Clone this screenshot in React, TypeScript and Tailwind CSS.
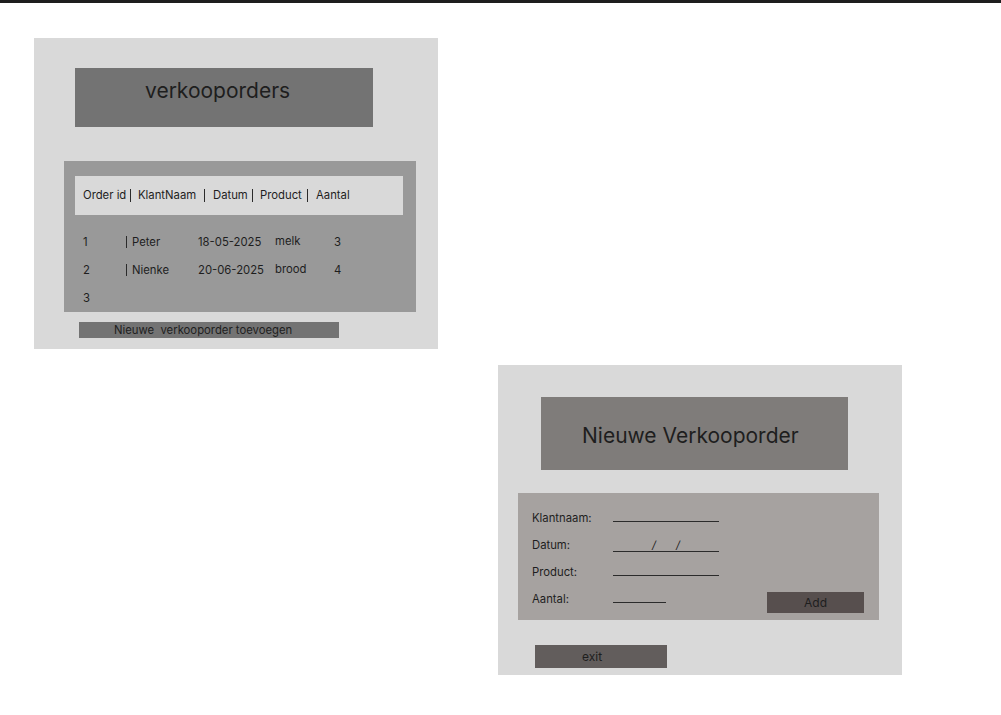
function Bar({ h = "h-[13px]" }: { h?: string }) {
  return <span className={`inline-block w-px shrink-0 bg-[#2b2b2b] ${h}`}></span>;
}

export default function App() {
  return (
    <div className="min-h-[715px] w-[1001px] bg-white font-['Inter',sans-serif] text-[#1e1e1e]">
      <div className="h-[3px] w-full bg-[#1e1e1e]"></div>

      {/* overzicht verkooporders */}
      <div className="ml-[34px] mt-[35px] flex h-[311px] w-[404px] flex-col bg-[#d9d9d9]">
        <div className="ml-[41px] mt-[30px] h-[59px] w-[298px] bg-[#737373] pl-[70px] pt-[10px] text-[21px] leading-[25px]">
          verkooporders
        </div>

        <div className="ml-[30px] mt-[34px] h-[151px] w-[352px] bg-[#999999] pl-[11px] pt-[15px]">
          <div className="flex h-[39px] w-[328px] items-center bg-[#d9d9d9] pb-[1px] pl-[8px] text-[11.3px] leading-[14px]">
            <span className="w-[47px]">Order id</span>
            <Bar />
            <span className="ml-[7px] w-[66px]">KlantNaam</span>
            <Bar />
            <span className="ml-[8px] w-[39px]">Datum</span>
            <Bar />
            <span className="ml-[7px] w-[47px]">Product</span>
            <Bar />
            <span className="ml-[8px]">Aantal</span>
          </div>
          <div className="mt-[13px] flex flex-col pl-[8px] text-[11.3px] leading-[14px]">
            <div className="flex h-[28px] items-center">
              <span className="w-[43px]">1</span>
              <span className="flex w-[72px] items-center">
                <Bar h="h-[12px]" />
                <span className="ml-[5px]">Peter</span>
              </span>
              <span className="w-[77px]">18-05-2025</span>
              <span className="mb-[3px] w-[59px]">melk</span>
              <span>3</span>
            </div>
            <div className="flex h-[28px] items-center">
              <span className="w-[43px]">2</span>
              <span className="flex w-[72px] items-center">
                <Bar h="h-[12px]" />
                <span className="ml-[5px]">Nienke</span>
              </span>
              <span className="w-[77px]">20-06-2025</span>
              <span className="mb-[3px] w-[59px]">brood</span>
              <span>4</span>
            </div>
            <div className="flex h-[28px] items-center">
              <span className="w-[43px]">3</span>
            </div>
          </div>
        </div>

        <div className="ml-[45px] mt-[10px] h-[16px] w-[260px] whitespace-pre bg-[#737373] pl-[35px] text-[11.3px] leading-[16px]">
          Nieuwe  verkooporder toevoegen
        </div>
      </div>

      {/* nieuwe verkooporder */}
      <div className="ml-[498px] mt-[16px] flex h-[310px] w-[404px] flex-col bg-[#d9d9d9]">
        <div className="ml-[43px] mt-[32px] h-[73px] w-[307px] bg-[#7f7c7a] pl-[41px] pt-[26px] text-[21px] leading-[25px]">
          Nieuwe Verkooporder
        </div>

        <div className="ml-[20px] mt-[23px] flex h-[127px] w-[361px] bg-[#a6a2a0]">
          <div className="flex flex-1 flex-col pl-[14px] pt-[11px] text-[11.3px] leading-[14px]">
            <div className="flex h-[27px] items-center">
              <span className="w-[81px]">Klantnaam:</span>
              <div className="mt-[7px] h-px w-[106px] bg-[#2b2b2b]"></div>
            </div>
            <div className="flex h-[27px] items-center">
              <span className="w-[81px]">Datum:</span>
              <div className="mt-[2px] flex h-[12px] w-[106px] items-end border-b border-[#2b2b2b] pl-[39px] text-[11px] leading-[12px]">
                <span className="italic">/</span>
                <span className="ml-[20px] italic">/</span>
              </div>
            </div>
            <div className="flex h-[27px] items-center">
              <span className="w-[81px]">Product:</span>
              <div className="mt-[7px] h-px w-[106px] bg-[#2b2b2b]"></div>
            </div>
            <div className="flex h-[27px] items-center">
              <span className="w-[81px]">Aantal:</span>
              <div className="mt-[7px] h-px w-[53px] bg-[#2b2b2b]"></div>
            </div>
          </div>
          <div className="mb-[7px] mr-[15px] flex h-[21px] w-[97px] items-center justify-center self-end bg-[#574f4e] text-[12px]">
            Add
          </div>
        </div>

        <div className="ml-[37px] mt-[25px] flex h-[23px] w-[132px] items-center bg-[#625d5c] pl-[47px] text-[12px]">
          exit
        </div>
      </div>
    </div>
  );
}
